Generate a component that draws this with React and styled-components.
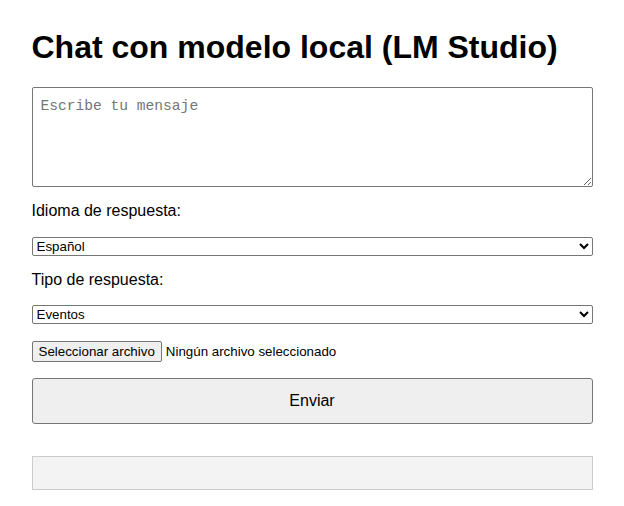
import React, { useState } from 'react'
import styled, { createGlobalStyle } from 'styled-components'

const GlobalStyle = createGlobalStyle`
  body {
    margin: 8px;
    font-family: "Liberation Sans", Arial, sans-serif;
    background: #fff;
    color: #000;
  }
`;

const Page = styled.div`
  max-width: 561px;
  margin: 0 auto;
  display: flex;
  flex-direction: column;
`;

const Title = styled.h1`
  font-size: 32px;
  font-weight: bold;
  margin: 21.44px 0 21px;
  line-height: 37px;
`;

const Message = styled.textarea`
  display: block;
  box-sizing: border-box;
  width: 100%;
  height: 100px;
  padding: 10px 8px 8px;
  margin: 0;
  border: 1px solid #767676;
  border-radius: 2px;
  font-family: "Liberation Mono", monospace;
  font-size: 14.6px;
  &::placeholder {
    color: #757575;
  }
`;

const Label = styled.label`
  display: block;
  font-size: 16px;
  line-height: 18.4px;
  margin: 15px 0 16px;
`;

const Select = styled.select`
  display: block;
  width: 100%;
  height: 19px;
  margin: 0;
  font-family: "Liberation Sans", Arial, sans-serif;
  font-size: 13.33px;
  border: 1px solid #767676;
  border-radius: 2px;
  background: #fff;
  color: #000;
`;

const FileRow = styled.div`
  display: flex;
  align-items: center;
  gap: 4px;
  margin-top: 17px;
  font-size: 13.33px;
`;

const FileButton = styled.button`
  font-family: "Liberation Sans", Arial, sans-serif;
  font-size: 13.33px;
  height: 21px;
  padding: 1px 6px;
  background: #efefef;
  border: 1px solid #767676;
  border-radius: 2px;
  color: #000;
`;

const SendButton = styled.button`
  margin-top: 16px;
  width: 100%;
  height: 46px;
  font-family: "Liberation Sans", Arial, sans-serif;
  font-size: 16px;
  background: #efefef;
  border: 1px solid #767676;
  border-radius: 3px;
  color: #000;
`;

const Output = styled.div`
  margin-top: 32px;
  box-sizing: border-box;
  height: 34px;
  padding: 10px;
  background: #f3f3f3;
  border: 1px solid #ccc;
`;

function App() {
  const [msg, setMsg] = useState('');
  const [lang, setLang] = useState('es');
  const [tipo, setTipo] = useState('eventos');

  return (
    <Page>
      <GlobalStyle />
      <Title>Chat con modelo local (LM Studio)</Title>
      <Message
        placeholder="Escribe tu mensaje"
        value={msg}
        onChange={(e) => setMsg(e.target.value)}
      />
      <Label htmlFor="idioma">Idioma de respuesta:</Label>
      <Select id="idioma" value={lang} onChange={(e) => setLang(e.target.value)}>
        <option value="es">Español</option>
        <option value="en">English</option>
      </Select>
      <Label htmlFor="tipo">Tipo de respuesta:</Label>
      <Select id="tipo" value={tipo} onChange={(e) => setTipo(e.target.value)}>
        <option value="eventos">Eventos</option>
        <option value="resumen">Resumen</option>
      </Select>
      <FileRow>
        <FileButton type="button">Seleccionar archivo</FileButton>
        <span>Ningún archivo seleccionado</span>
      </FileRow>
      <SendButton type="button">Enviar</SendButton>
      <Output />
    </Page>
  )
}

export default App
